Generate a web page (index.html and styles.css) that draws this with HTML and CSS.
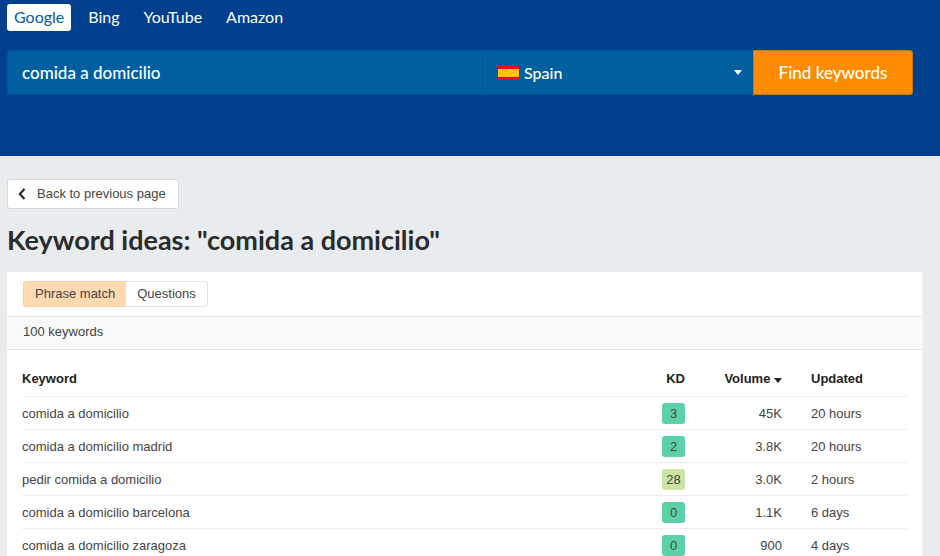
FILE: index.html
```html
<!DOCTYPE html>
<html lang="en">
<head>
  <meta charset="UTF-8">
  <title>Keyword ideas: "comida a domicilio"</title>
  <meta name="viewport" content="width=device-width, initial-scale=1.0">
  <link rel="stylesheet" href="styles.css">
</head>
<body>

<header class="hero">
  <nav class="engines">
    <a href="#google" class="active">Google</a>
    <a href="#bing">Bing</a>
    <a href="#youtube">YouTube</a>
    <a href="#amazon">Amazon</a>
  </nav>

  <form class="search">
    <input class="search-input" type="text" name="keyword" value="comida a domicilio" aria-label="Keyword">
    <label class="country">
      <svg class="flag" width="21" height="14" viewBox="0 0 21 14" aria-hidden="true">
        <rect width="21" height="14" fill="#ee0a1c"/>
        <rect y="3" width="21" height="8" fill="#fcc40c"/>
      </svg>
      <select name="country" aria-label="Country">
        <option>Spain</option>
      </select>
      <svg class="caret" width="8" height="5" viewBox="0 0 8 5" aria-hidden="true"><path d="M0 0h8L4 5z" fill="#fff"/></svg>
    </label>
    <button class="search-button" type="button">Find keywords</button>
  </form>
</header>

<main>
  <a href="#back" class="back">
    <svg width="8" height="12" viewBox="0 0 8 12" aria-hidden="true"><path d="M6.5 1L1.8 6l4.7 5" fill="none" stroke="#222" stroke-width="2"/></svg>
    Back to previous page
  </a>

  <h1>Keyword ideas: "comida a domicilio"</h1>

  <section class="panel">
    <div class="tabs">
      <button type="button" class="active">Phrase match</button>
      <button type="button">Questions</button>
    </div>
    <p class="count">100 keywords</p>
    <div class="table-wrap">
      <table>
        <thead>
          <tr>
            <th>Keyword</th>
            <th class="kd">KD</th>
            <th class="volume">Volume <svg width="8" height="5" viewBox="0 0 8 5" aria-hidden="true"><path d="M0 0h8L4 5z" fill="#222"/></svg></th>
            <th class="updated">Updated</th>
          </tr>
        </thead>
        <tbody>
          <tr><td>comida a domicilio</td><td class="kd"><span class="badge">3</span></td><td class="volume">45K</td><td class="updated">20 hours</td></tr>
          <tr><td>comida a domicilio madrid</td><td class="kd"><span class="badge">2</span></td><td class="volume">3.8K</td><td class="updated">20 hours</td></tr>
          <tr><td>pedir comida a domicilio</td><td class="kd"><span class="badge medium">28</span></td><td class="volume">3.0K</td><td class="updated">2 hours</td></tr>
          <tr><td>comida a domicilio barcelona</td><td class="kd"><span class="badge">0</span></td><td class="volume">1.1K</td><td class="updated">6 days</td></tr>
          <tr><td>comida a domicilio zaragoza</td><td class="kd"><span class="badge">0</span></td><td class="volume">900</td><td class="updated">4 days</td></tr>
        </tbody>
      </table>
    </div>
  </section>
</main>

</body>
</html>
```
FILE: styles.css
```css
* { box-sizing: border-box; }
body { margin: 0; font-family: Arial, "Liberation Sans", sans-serif; font-size: 13px; line-height: 20px; background: #e8ecef; color: #444; }
input, select, button { font: inherit; color: inherit; margin: 0; }

/* search header */
.hero { background: #00408f; color: white; font-family: Lato, sans-serif; padding: 4px 27px 61px 7px; }
.engines { display: flex; gap: 10px; font-size: 16px; }
.engines a { color: white; text-decoration: none; padding: 3px 7px 4px; border-radius: 3px; }
.engines a.active { background: white; color: #00609f; }
.search { display: flex; height: 45px; margin-top: 19px; font-size: 17px; font-weight: 500; }
.search-input { flex: 1; min-width: 0; padding: 0 14px; background: #00609f; border: 1px solid #00559a; border-radius: 3px 0 0 3px; }
.country { display: flex; align-items: center; width: 270px; padding: 0 10px 0 15px; background: #00609f; border: 1px solid #00559a; border-left: 0; font-size: 16px; }
.country select { flex: 1; padding: 0 5px; border: 0; background: none; appearance: none; }
.search-button { width: 160px; background: #ff8c00; border: 1px solid #c47a20; border-radius: 0 3px 3px 0; cursor: pointer; }

main { padding: 23px 17px 20px 7px; }
.back { display: inline-flex; align-items: center; gap: 11px; padding: 4px 12px 4px 10px; background: white; border: 1px solid #d6d9dc; border-radius: 3px; color: #444; text-decoration: none; vertical-align: top; }
h1 { margin: 15px 0 16px; font-family: Lato, sans-serif; font-size: 27px; line-height: 32px; font-weight: 700; color: #2b2b2b; }

.panel { background: white; border-right: 1px solid #f1f3f4; }
.tabs { display: flex; padding: 9px 16px; }
.tabs button { height: 26px; padding: 0 11px; background: white; border: 1px solid #e2e2e2; border-left: 0; border-radius: 0 3px 3px 0; cursor: pointer; }
.tabs button.active { background: #ffd9b0; border: 1px solid #f6d1a8; border-right: 0; border-radius: 3px 0 0 3px; }
.count { margin: 0; padding: 5px 16px 7px; background: #f9f9f9; border: solid #e6e6e6; border-width: 1px 0; }

/* results */
.table-wrap { padding: 13px 15px; }
table { width: 100%; border-collapse: collapse; table-layout: fixed; }
th, td { height: 33px; padding: 0; text-align: left; border-bottom: 1px solid #eee; }
td { padding-top: 2px; }
th { color: #222; }
th.kd, th.volume, td.kd, td.volume { text-align: right; }
.kd { width: 80px; }
.volume { width: 97px; }
.updated { width: 125px; }
th.updated, td.updated { padding-left: 29px; }
.badge { display: inline-block; min-width: 23px; line-height: 21px; text-align: center; vertical-align: top; background: #5cd1a8; border-radius: 3px; }
.badge.medium { background: #cbe4a4; }
```
